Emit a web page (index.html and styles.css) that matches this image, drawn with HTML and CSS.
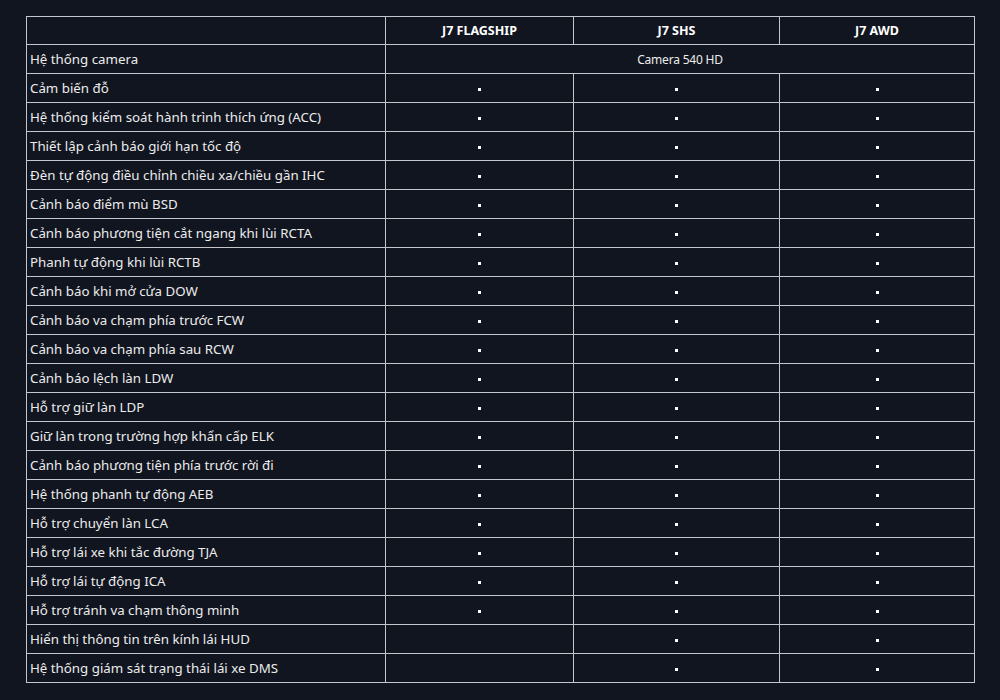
FILE: index.html
```html
<!DOCTYPE html>
<html lang="vi">
<head>
<meta charset="utf-8">
<link rel="stylesheet" href="styles.css">
</head>
<body>
<div class="wrap">
<table class="spec">
<colgroup>
<col class="c-name"><col class="c-a"><col class="c-b"><col class="c-c">
</colgroup>
<thead>
<tr><th></th><th>J7 FLAGSHIP</th><th>J7 SHS</th><th>J7 AWD</th></tr>
</thead>
<tbody>
<tr><td class="name">Hệ thống camera</td><td class="val" colspan="3">Camera 540 HD</td></tr>
<tr><td class="name">Cảm biến đỗ</td><td class="val"><span class="dot"></span></td><td class="val"><span class="dot"></span></td><td class="val"><span class="dot"></span></td></tr>
<tr><td class="name">Hệ thống kiểm soát hành trình thích ứng (ACC)</td><td class="val"><span class="dot"></span></td><td class="val"><span class="dot"></span></td><td class="val"><span class="dot"></span></td></tr>
<tr><td class="name">Thiết lập cảnh báo giới hạn tốc độ</td><td class="val"><span class="dot"></span></td><td class="val"><span class="dot"></span></td><td class="val"><span class="dot"></span></td></tr>
<tr><td class="name">Đèn tự động điều chỉnh chiều xa/chiều gần IHC</td><td class="val"><span class="dot"></span></td><td class="val"><span class="dot"></span></td><td class="val"><span class="dot"></span></td></tr>
<tr><td class="name">Cảnh báo điểm mù BSD</td><td class="val"><span class="dot"></span></td><td class="val"><span class="dot"></span></td><td class="val"><span class="dot"></span></td></tr>
<tr><td class="name">Cảnh báo phương tiện cắt ngang khi lùi RCTA</td><td class="val"><span class="dot"></span></td><td class="val"><span class="dot"></span></td><td class="val"><span class="dot"></span></td></tr>
<tr><td class="name">Phanh tự động khi lùi RCTB</td><td class="val"><span class="dot"></span></td><td class="val"><span class="dot"></span></td><td class="val"><span class="dot"></span></td></tr>
<tr><td class="name">Cảnh báo khi mở cửa DOW</td><td class="val"><span class="dot"></span></td><td class="val"><span class="dot"></span></td><td class="val"><span class="dot"></span></td></tr>
<tr><td class="name">Cảnh báo va chạm phía trước FCW</td><td class="val"><span class="dot"></span></td><td class="val"><span class="dot"></span></td><td class="val"><span class="dot"></span></td></tr>
<tr><td class="name">Cảnh báo va chạm phía sau RCW</td><td class="val"><span class="dot"></span></td><td class="val"><span class="dot"></span></td><td class="val"><span class="dot"></span></td></tr>
<tr><td class="name">Cảnh báo lệch làn LDW</td><td class="val"><span class="dot"></span></td><td class="val"><span class="dot"></span></td><td class="val"><span class="dot"></span></td></tr>
<tr><td class="name">Hỗ trợ giữ làn LDP</td><td class="val"><span class="dot"></span></td><td class="val"><span class="dot"></span></td><td class="val"><span class="dot"></span></td></tr>
<tr><td class="name">Giữ làn trong trường hợp khẩn cấp ELK</td><td class="val"><span class="dot"></span></td><td class="val"><span class="dot"></span></td><td class="val"><span class="dot"></span></td></tr>
<tr><td class="name">Cảnh báo phương tiện phía trước rời đi</td><td class="val"><span class="dot"></span></td><td class="val"><span class="dot"></span></td><td class="val"><span class="dot"></span></td></tr>
<tr><td class="name">Hệ thống phanh tự động AEB</td><td class="val"><span class="dot"></span></td><td class="val"><span class="dot"></span></td><td class="val"><span class="dot"></span></td></tr>
<tr><td class="name">Hỗ trợ chuyển làn LCA</td><td class="val"><span class="dot"></span></td><td class="val"><span class="dot"></span></td><td class="val"><span class="dot"></span></td></tr>
<tr><td class="name">Hỗ trợ lái xe khi tắc đường TJA</td><td class="val"><span class="dot"></span></td><td class="val"><span class="dot"></span></td><td class="val"><span class="dot"></span></td></tr>
<tr><td class="name">Hỗ trợ lái tự động ICA</td><td class="val"><span class="dot"></span></td><td class="val"><span class="dot"></span></td><td class="val"><span class="dot"></span></td></tr>
<tr><td class="name">Hỗ trợ tránh va chạm thông minh</td><td class="val"><span class="dot"></span></td><td class="val"><span class="dot"></span></td><td class="val"><span class="dot"></span></td></tr>
<tr><td class="name">Hiển thị thông tin trên kính lái HUD</td><td class="val"></td><td class="val"><span class="dot"></span></td><td class="val"><span class="dot"></span></td></tr>
<tr><td class="name">Hệ thống giám sát trạng thái lái xe DMS</td><td class="val"></td><td class="val"><span class="dot"></span></td><td class="val"><span class="dot"></span></td></tr>
</tbody>
</table>
</div>
</body>
</html>
```

FILE: styles.css
```css
html, body {
  margin: 0;
  padding: 0;
  background: #111520;
  color: #ececec;
  font-family: "Noto Sans", "Open Sans", sans-serif;
}
.wrap {
  padding: 16px 26px;
}
.spec {
  width: 948px;
  border-collapse: collapse;
  table-layout: fixed;
}
.c-name { width: 359px; }
.c-a { width: 188px; }
.c-b { width: 206px; }
.c-c { width: 195px; }
.spec th, .spec td {
  border: 1.5px solid #c4c6cb;
  padding: 0 3px;
}
.spec thead tr { height: 28px; }
.spec tbody tr { height: 29px; }
.spec th {
  font-size: 12.5px;
  font-weight: 700;
  font-stretch: condensed;
  letter-spacing: 0;
  text-align: center;
  color: #ffffff;
}
.name {
  font-size: 13.3px;
  text-align: left;
  color: #ececec;
}
.val {
  font-size: 12px;
  font-stretch: condensed;
  letter-spacing: -0.2px;
  text-align: center;
  color: #ececec;
}
.dot {
  display: inline-block;
  width: 3px;
  height: 3px;
  background: #ffffff;
  vertical-align: middle;
}
```
